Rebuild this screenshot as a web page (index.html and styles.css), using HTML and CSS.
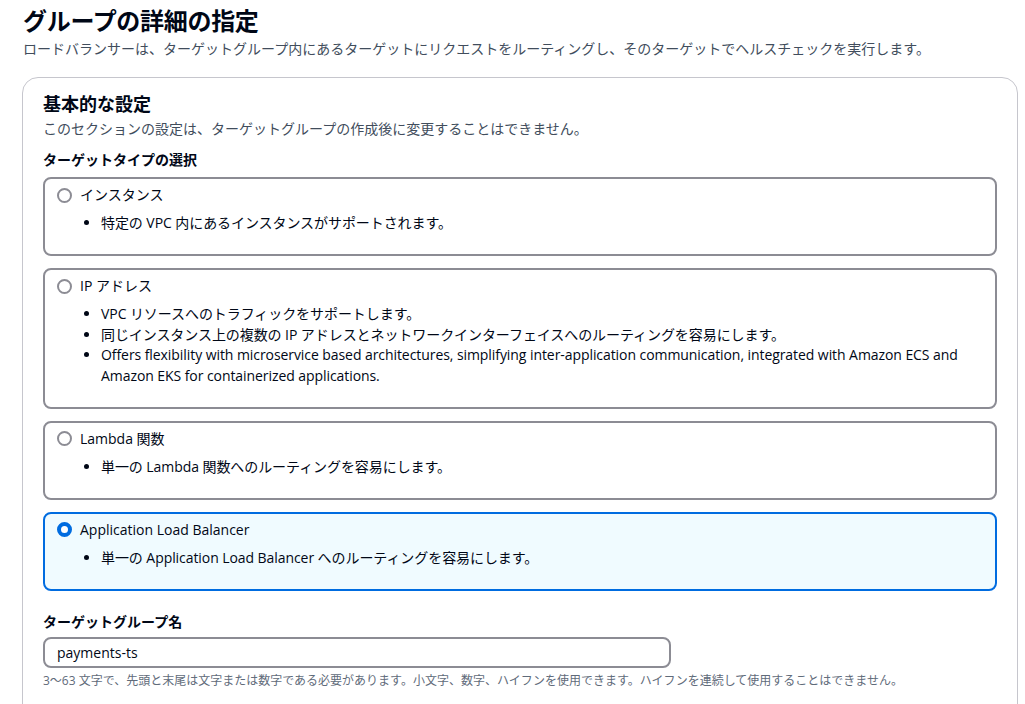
FILE: index.html
```html
<!DOCTYPE html>
<html lang="ja">
<head>
<meta charset="utf-8">
<title>グループの詳細の指定</title>
<link rel="stylesheet" href="styles.css">
</head>
<body>
<main class="page">
  <header class="page-header">
    <h1 class="page-title">グループの詳細の指定</h1>
    <p class="page-desc">ロードバランサーは、ターゲットグループ内にあるターゲットにリクエストをルーティングし、そのターゲットでヘルスチェックを実行します。</p>
  </header>

  <section class="card">
    <h2 class="card-title">基本的な設定</h2>
    <p class="card-desc">このセクションの設定は、ターゲットグループの作成後に変更することはできません。</p>

    <div class="field-label">ターゲットタイプの選択</div>
    <div class="tiles">
      <label class="tile">
        <span class="tile-head"><span class="radio"></span><span class="tile-label">インスタンス</span></span>
        <ul class="tile-list">
          <li>特定の VPC 内にあるインスタンスがサポートされます。</li>
        </ul>
      </label>
      <label class="tile">
        <span class="tile-head"><span class="radio"></span><span class="tile-label">IP アドレス</span></span>
        <ul class="tile-list">
          <li>VPC リソースへのトラフィックをサポートします。</li>
          <li>同じインスタンス上の複数の IP アドレスとネットワークインターフェイスへのルーティングを容易にします。</li>
          <li>Offers flexibility with microservice based architectures, simplifying inter-application communication, integrated with Amazon ECS and Amazon EKS for containerized applications.</li>
        </ul>
      </label>
      <label class="tile">
        <span class="tile-head"><span class="radio"></span><span class="tile-label">Lambda 関数</span></span>
        <ul class="tile-list">
          <li>単一の Lambda 関数へのルーティングを容易にします。</li>
        </ul>
      </label>
      <label class="tile tile-selected">
        <span class="tile-head"><span class="radio radio-checked"></span><span class="tile-label">Application Load Balancer</span></span>
        <ul class="tile-list">
          <li>単一の Application Load Balancer へのルーティングを容易にします。</li>
        </ul>
      </label>
    </div>

    <div class="field-label field-name">ターゲットグループ名</div>
    <div class="input">payments-ts</div>
    <p class="hint">3〜63 文字で、先頭と末尾は文字または数字である必要があります。小文字、数字、ハイフンを使用できます。ハイフンを連続して使用することはできません。</p>
  </section>
</main>
</body>
</html>
```

FILE: styles.css
```css
* { box-sizing: border-box; }

html, body {
  margin: 0;
  padding: 0;
  background: #ffffff;
}

body {
  font-family: "Open Sans", "Noto Sans CJK JP", sans-serif;
  font-size: 14px;
  line-height: 20px;
  color: #000716;
}

.page {
  padding: 6px 8px 0 22px;
}

.page-title {
  margin: 0 0 0 1px;
  font-size: 24px;
  line-height: 30px;
  font-weight: 700;
  letter-spacing: -0.3px;
}

.page-desc {
  margin: 3px 0 0 1px;
  color: #414d5c;
  font-size: 14px;
  line-height: 20px;
}

.card {
  margin-top: 18px;
  width: 996px;
  min-height: 700px;
  border: 1px solid #c6c6cd;
  border-radius: 16px;
  padding: 15px 20px 20px 20px;
}

.card-title {
  margin: 0;
  font-size: 18px;
  line-height: 22px;
  font-weight: 700;
}

.card-desc {
  margin: 4px 0 0;
  color: #414d5c;
}

.field-label {
  margin-top: 11px;
  font-weight: 700;
}

.tiles {
  margin-top: 7px;
  display: flex;
  flex-direction: column;
  gap: 12px;
}

.tile {
  display: block;
  border: 2px solid #8c8c94;
  border-radius: 8px;
  padding: 6px 12px 20.5px 12px;
  background: #ffffff;
}

.tile-selected {
  border-color: #006ce0;
  background: #f0fbff;
}

.tile-head {
  display: flex;
  align-items: center;
  gap: 8px;
}

.radio {
  flex: none;
  width: 15px;
  height: 15px;
  border-radius: 50%;
  border: 2px solid #8c8c94;
  background: #ffffff;
}

.radio-checked {
  border: 4.5px solid #006ce0;
}

.tile-list {
  margin: 8px 0 0;
  padding: 0 0 0 44px;
}

.tile-list li {
  line-height: 20.5px;
  letter-spacing: -0.07px;
}

.field-name {
  margin-top: 21px;
}

.input {
  margin-top: 5px;
  width: 628px;
  height: 31px;
  border: 2px solid #8c8c94;
  border-radius: 8px;
  padding: 3px 12px;
  line-height: 21px;
}

.hint {
  margin: 5px 0 0;
  font-size: 12px;
  line-height: 16px;
  color: #5f6b7a;
}
```
